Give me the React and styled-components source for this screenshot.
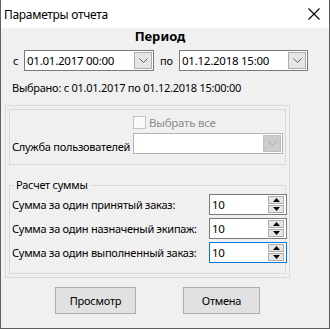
import React from 'react';
import styled, { createGlobalStyle } from 'styled-components';

const GlobalStyle = createGlobalStyle`
html, body {
  margin: 0;
  padding: 0;
  background: #f0f0f0;
}
* {
  box-sizing: border-box;
}
`;

const Window = styled.div`
width: 330px;
height: 329px;
background: #f0f0f0;
border: 1px solid #5f5f5f;
border-top: none;
font-family: 'Noto Sans', sans-serif;
font-size: 11px;
letter-spacing: -0.25px;
color: #000;
display: flex;
flex-direction: column;
`;

const TitleBar = styled.div`
height: 28px;
background: #fff;
display: flex;
align-items: center;
justify-content: space-between;
padding: 0 9px 0 3px;
`;

const TitleText = styled.div`
font-size: 12px;
letter-spacing: -0.3px;
`;

const CloseIcon = () => (
    <svg width="12" height="12" viewBox="0 0 12 12">
        <path d="M0.5 0.5 L11.5 11.5 M11.5 0.5 L0.5 11.5" stroke="#000" strokeWidth="1.1" fill="none" />
    </svg>
);

const Heading = styled.div`
text-align: center;
font-weight: bold;
font-size: 13px;
line-height: 14px;
letter-spacing: 0;
padding-right: 10px;
margin-top: 1px;
`;

const DateRow = styled.div`
display: flex;
align-items: center;
padding-left: 12px;
margin-top: 7px;
height: 21px;
`;

const Caption = styled.div`
width: ${p => p.$w}px;
padding-left: ${p => p.$pl || 0}px;
`;

const Combo = styled.div`
width: ${p => p.$w}px;
flex-shrink: 0;
height: 21px;
background: #fff;
border: 1px solid ${p => p.$disabled ? '#b4b4b4' : '#7a7a7a'};
display: flex;
align-items: center;
justify-content: space-between;
padding: 0 0 0 2px;
`;

const ComboText = styled.div`
font-size: 11.5px;
`;

const DropButton = styled.div`
width: 18px;
height: 17px;
margin-right: 1px;
background: ${p => p.$disabled ? '#cccccc' : '#e5e5e5'};
border: 1px solid ${p => p.$disabled ? '#bfbfbf' : '#acacac'};
display: flex;
align-items: center;
justify-content: center;
`;

const Chevron = ({ color }) => (
    <svg width="9" height="5" viewBox="0 0 9 5">
        <path d="M0.5 0.5 L4.5 4.5 L8.5 0.5" stroke={color} strokeWidth="1" fill="none" />
    </svg>
);

const SelectedText = styled.div`
padding-left: 11px;
margin-top: 9px;
line-height: 16px;
font-size: 11px;
`;

const Panel = styled.div`
margin: 9px 0 0 4px;
width: 285px;
border: 1px solid #dadada;
padding: 3px;
`;

const UserGroup = styled.div`
height: 56px;
border: 1px solid #dadada;
padding: 6px 0 0 2px;
display: grid;
grid-template-columns: 121px 150px;
grid-template-rows: 13px 21px;
row-gap: 4px;
align-items: end;
`;

const CheckCell = styled.div`
grid-column: 2;
display: flex;
align-items: center;
gap: 3px;
color: #8d8d8d;
font-size: 11.5px;
line-height: 13px;
`;

const CheckBox = styled.div`
width: 13px;
height: 13px;
border: 1px solid #c4c4c4;
background: #fafafa;
`;

const FieldLabel = styled.div`
flex: 1;
min-width: 0;
font-size: 11px;
line-height: 14px;
white-space: nowrap;
`;

const SumGroup = styled.fieldset`
margin: 13px 0 0 0;
border: 1px solid #dadada;
padding: 2px 0 10px 2px;
min-width: 0;
display: flex;
flex-direction: column;
gap: 3px;
`;

const Legend = styled.legend`
margin-left: 2px;
padding: 0 2px;
font-size: 11px;
line-height: 14px;
`;

const SumRow = styled.div`
display: flex;
align-items: center;
height: 21px;
margin-right: -2px;
`;

const Spin = styled.div`
width: 78px;
flex-shrink: 0;
height: 21px;
background: #fff;
border: 1px solid ${p => p.$focused ? '#0078d7' : '#7a7a7a'};
display: flex;
align-items: center;
justify-content: space-between;
padding-left: 2px;
`;

const SpinValue = styled.div`
font-size: 11.5px;
`;

const SpinButtons = styled.div`
display: flex;
flex-direction: column;
gap: 1px;
margin-right: 2px;
`;

const SpinButton = styled.div`
width: 16px;
height: 8px;
background: #e6e6e6;
border: 1px solid #adadad;
display: flex;
align-items: center;
justify-content: center;
`;

const Arrow = ({ up }) => (
    <svg width="7" height="4" viewBox="0 0 7 4">
        <path d={up ? 'M0 4 L3.5 0 L7 4 Z' : 'M0 0 L7 0 L3.5 4 Z'} fill="#000" />
    </svg>
);

const ButtonRow = styled.div`
display: flex;
gap: 47px;
padding-left: 54px;
margin-top: 9px;
`;

const Button = styled.div`
width: ${p => p.$w}px;
height: 27px;
background: #e1e1e1;
border: 1px solid #adadad;
display: flex;
align-items: center;
justify-content: center;
font-size: 11px;
`;

const SpinField = ({ value, focused }) => (
    <Spin $focused={focused}>
        <SpinValue>{value}</SpinValue>
        <SpinButtons>
            <SpinButton><Arrow up /></SpinButton>
            <SpinButton><Arrow /></SpinButton>
        </SpinButtons>
    </Spin>
);

const sums = [
    { label: 'Сумма за один принятый заказ:', value: '10' },
    { label: 'Сумма за один назначеный экипаж:', value: '10' },
    { label: 'Сумма за один выполненный заказ:', value: '10', focused: true },
];

const App = () => (
    <>
        <GlobalStyle />
        <Window>
            <TitleBar>
                <TitleText>Параметры отчета</TitleText>
                <CloseIcon />
            </TitleBar>
            <Heading>Период</Heading>
            <DateRow>
                <Caption $w={11}>с</Caption>
                <Combo $w={130}>
                    <ComboText>01.01.2017 00:00</ComboText>
                    <DropButton><Chevron color="#606060" /></DropButton>
                </Combo>
                <Caption $w={25} $pl={6}>по</Caption>
                <Combo $w={129}>
                    <ComboText>01.12.2018 15:00</ComboText>
                    <DropButton><Chevron color="#606060" /></DropButton>
                </Combo>
            </DateRow>
            <SelectedText>Выбрано: с 01.01.2017 по 01.12.2018 15:00:00</SelectedText>
            <Panel>
                <UserGroup>
                    <CheckCell>
                        <CheckBox />
                        Выбрать все
                    </CheckCell>
                    <FieldLabel>Служба пользователей</FieldLabel>
                    <Combo $w={150} $disabled>
                        <span />
                        <DropButton $disabled><Chevron color="#a8a8a8" /></DropButton>
                    </Combo>
                </UserGroup>
                <SumGroup>
                    <Legend>Расчет суммы</Legend>
                    {sums.map(s => (
                        <SumRow key={s.label}>
                            <FieldLabel>{s.label}</FieldLabel>
                            <SpinField value={s.value} focused={s.focused} />
                        </SumRow>
                    ))}
                </SumGroup>
            </Panel>
            <ButtonRow>
                <Button $w={81}>Просмотр</Button>
                <Button $w={77}>Отмена</Button>
            </ButtonRow>
        </Window>
    </>
);

export default App;
